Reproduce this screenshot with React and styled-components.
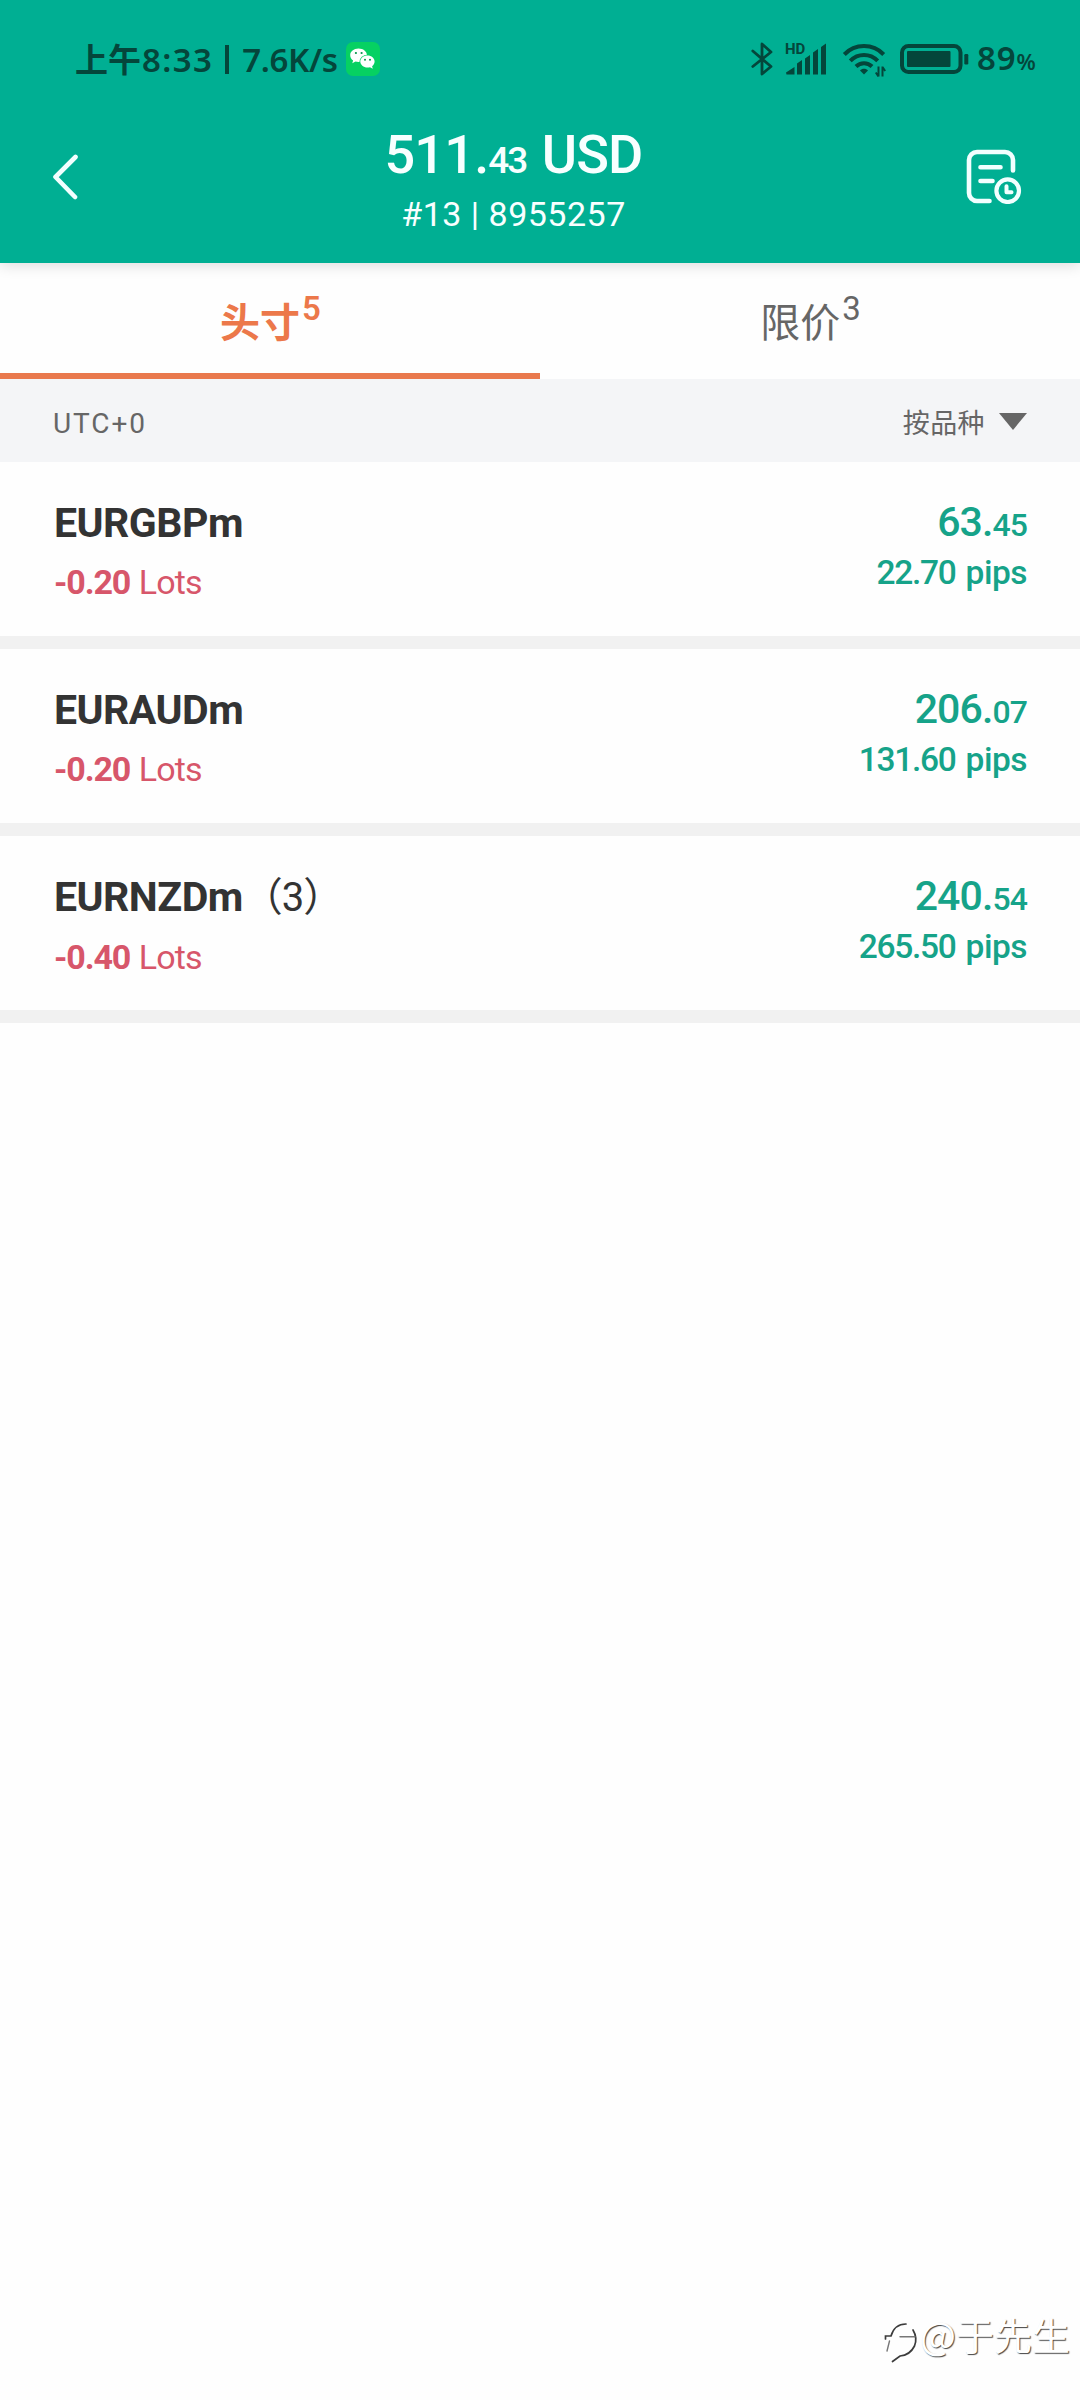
import React from 'react';
import styled, { createGlobalStyle } from 'styled-components';

const positions = [
    { symbol: 'EURGBPm', lots: '-0.20', whole: '63.', cents: '45', pips: '22.70' },
    { symbol: 'EURAUDm', lots: '-0.20', whole: '206.', cents: '07', pips: '131.60' },
    { symbol: 'EURNZDm', count: 3, lots: '-0.40', whole: '240.', cents: '54', pips: '265.50' },
];

function WechatIcon() {
    return (
        <svg width="34" height="34" viewBox="0 0 34 34">
            <rect width="34" height="34" rx="7" fill="#06d162" />
            <path d="M12.5 6.5c-4.800 0-8.300 3-8.300 6.700 0 2.200 1.100 3.900 2.900 5.200l-.8 2.900 3.200-1.700c1 .3 1.900.4 3 .4 4.700 0 8.400-3 8.400-6.800s-3.700-6.700-8.400-6.700z" fill="#fff" />
            <ellipse cx="21.500" cy="19.600" rx="8" ry="6.900" fill="#06d162" />
            <path d="M21.500 13.600c-4.100 0-7.200 2.700-7.200 6s3.100 6 7.200 6c.9 0 1.700-.1 2.500-.3l2.800 1.400-.7-2.400c1.600-1.200 2.500-2.800 2.500-4.700 0-3.300-3-6-7.100-6z" fill="#fff" />
            <circle cx="9.900" cy="11" r="1.100" fill="#06964a" />
            <circle cx="15.600" cy="11" r="1.100" fill="#06964a" />
            <circle cx="19" cy="17.800" r="1" fill="#06964a" />
            <circle cx="24" cy="17.800" r="1" fill="#06964a" />
        </svg>
    );
}

function BluetoothIcon() {
    return (
        <svg width="24" height="36" viewBox="0 0 24 36" fill="none" stroke="#04463b" strokeWidth="2.800" strokeLinecap="round" strokeLinejoin="round">
            <path d="M1.800 10 20 25.500 11 33V3l9 8L1.800 25.500" />
        </svg>
    );
}

function SignalIcon() {
    return (
        <svg width="42" height="46" viewBox="0 -6 42 46" fill="#04463b">
            <text x="0" y="12" fontFamily="Roboto, sans-serif" fontWeight="700" fontSize="15">HD</text>
            <path d="M1 30.500 9.500 25v7.500H1.500zM12 21.500 17 18v14.500h-5zM20 16.500l5-3.500v19.500h-5zM28 10.500 33 7v25.500h-5zM36 5l5-3.500v31h-5z" />
        </svg>
    );
}

function WifiIcon() {
    return (
        <svg width="44" height="36" viewBox="0 0 44 36" fill="none" stroke="#04463b" strokeWidth="4">
            <path d="M2.300 13.500C13 2.300 31 2.300 41.700 13.500" />
            <path d="M8.300 19.800C16 12 28 12 35.700 19.800" />
            <path d="M14 25.500c4.500-4.500 11.500-4.500 16 0" />
            <path d="M18 29.500c2-2.500 6-2.500 8 0L22 33.500z" fill="#04463b" stroke="none" />
            <path d="M36.500 25.500v10M36.500 35.500l-2.700-4M40.500 35.500v-10M40.500 26l2.700 4" strokeWidth="2" />
        </svg>
    );
}

function BatteryIcon() {
    return (
        <svg width="70" height="30" viewBox="0 0 70 30" fill="#04463b">
            <rect x="2" y="2" width="58.500" height="26" rx="6.500" fill="none" stroke="#04463b" strokeWidth="4" />
            <rect x="7" y="7" width="43.500" height="16" rx="1" />
            <rect x="64.300" y="10" width="4" height="10.500" rx="1.200" />
        </svg>
    );
}

function HistoryIcon() {
    return (
        <svg width="58" height="58" viewBox="0 0 58 58" fill="none" stroke="#f2ffff" strokeWidth="4.600" strokeLinecap="round" strokeLinejoin="round">
            <path d="M49 24.500V14a8 8 0 0 0-8-8H13a8 8 0 0 0-8 8v33a8 8 0 0 0 8 8h12.500" />
            <path d="M16.500 21.300h20M16.500 35h12" />
            <circle cx="43.700" cy="44.700" r="11.300" strokeWidth="4.200" />
            <path d="M42.500 40.300v6h5" strokeWidth="4" />
        </svg>
    );
}

function PositionRow({ item }) {
    return (
        <Row>
            <div>
                <Symbol>{item.symbol}{item.count && <Count>（{item.count}）</Count>}</Symbol>
                <Lots><b>{item.lots}</b> Lots</Lots>
            </div>
            <Result>
                <Profit>{item.whole}<small>{item.cents}</small></Profit>
                <Pips>{item.pips} <span>pips</span></Pips>
            </Result>
        </Row>
    );
}

function App() {
    return (
        <Screen>
            <GlobalStyle />
            <Header>
                <StatusBar>
                    <Clock>上午<Time>8:33</Time><i /><Speed>7.6K/s</Speed></Clock>
                    <WechatIcon />
                    <StatusIcons>
                        <BluetoothIcon />
                        <SignalIcon />
                        <WifiIcon />
                        <BatteryIcon />
                        <Battery>89<small>%</small></Battery>
                    </StatusIcons>
                </StatusBar>
                <TitleBar>
                    <Back>
                        <svg width="28" height="46" viewBox="0 0 28 46" fill="none" stroke="#f2ffff" strokeWidth="4.600" strokeLinecap="round" strokeLinejoin="round">
                            <path d="M24.500 3 4.500 23l19.500 20" />
                        </svg>
                    </Back>
                    <Account>
                        <Balance>511.<small>43</small> USD</Balance>
                        <AccountNo>#13 | 8955257</AccountNo>
                    </Account>
                    <History><HistoryIcon /></History>
                </TitleBar>
            </Header>
            <Tabs>
                <Tab $active>头寸<sup>5</sup></Tab>
                <Tab>限价<sup>3</sup></Tab>
            </Tabs>
            <SortBar>
                <Zone>UTC+0</Zone>
                <SortBy>按品种<Triangle /></SortBy>
            </SortBar>
            {positions.map((item) => <PositionRow key={item.symbol} item={item} />)}
            <Watermark>
                <svg width="36" height="42" viewBox="0 0 36 42" fill="none" strokeWidth="1.700" strokeLinecap="round">
                    <g stroke="#3c3c3c">
                        <path d="M1.500 17v-3h5.500C9 7 14 2 22 2" />
                        <path d="M29 8c3 5 3.500 11 1.500 16-3 6-8 9.500-14.500 10L8.500 39.500" />
                    </g>
                    <path d="M5.500 19 3 29M16 14.700h15" stroke="#777" strokeWidth="1.400" />
                </svg>
                <span>@于先生</span>
            </Watermark>
        </Screen>
    );
}

export default App;

// Style Components

const GlobalStyle = createGlobalStyle`
    body {
        margin: 0;
        background-color: #fefefe;
        font-family: Roboto, "Noto Sans CJK SC", sans-serif;
    }
    svg {
        display: block;
        flex-shrink: 0;
    }
`

const Screen = styled.div`
    display: flex;
    flex-direction: column;
    width: 1080px;
    height: 2400px;
    background-color: #fefefe;
`

const Header = styled.header`
    position: relative;
    height: 263px;
    background-color: #00af93;
    box-shadow: 0 2px 14px rgba(0, 0, 0, 0.14);
`

const StatusBar = styled.div`
    display: flex;
    align-items: center;
    height: 118px;
    padding: 0 43px 0 75px;
    color: #04463b;
`

const Clock = styled.div`
    display: flex;
    align-items: center;
    width: 271px;
    padding-top: 1px;
    font-family: "Noto Sans", "Noto Sans CJK SC", sans-serif;
    font-size: 33px;
    font-weight: 600;
    line-height: 40px;
    white-space: nowrap;

    i {
        width: 4px;
        height: 29px;
        margin: 0 13px 0 12px;
        background-color: #04463b;
    }
`

const Time = styled.span`
    margin-left: 1px;
    letter-spacing: 1.4px;
`

const Speed = styled.span`
    letter-spacing: -0.4px;
`

const StatusIcons = styled.div`
    display: flex;
    align-items: center;
    margin-left: auto;

    svg:nth-child(1) { margin-right: 10px; }
    svg:nth-child(2) { margin-right: 15px; }
    svg:nth-child(3) { margin-right: 14px; }
    svg:nth-child(4) { margin-right: 7px; }
`

const Battery = styled.span`
    width: 60px;
    padding-top: 1px;
    font-family: "Noto Sans", sans-serif;
    font-size: 33px;
    font-weight: 600;
    line-height: 40px;
    letter-spacing: 0.9px;
    white-space: nowrap;

    small {
        font-size: 22px;
    }
`

const TitleBar = styled.div`
    display: flex;
    height: 145px;
    color: #f8ffff;
`

const Back = styled.div`
    width: 80px;
    padding: 36px 0 0 51px;
    box-sizing: border-box;
`

const Account = styled.div`
    flex: 1;
    text-align: center;
    white-space: nowrap;
`

const Balance = styled.div`
    height: 73px;
    font-size: 54px;
    font-weight: 500;
    line-height: 73px;
    letter-spacing: -0.8px;
    word-spacing: 3px;

    small {
        font-size: 37px;
        letter-spacing: -2.2px;
    }
`

const AccountNo = styled.div`
    margin-top: 3px;
    font-size: 34px;
    line-height: 40px;
    letter-spacing: 0.5px;
`

const History = styled.div`
    width: 133px;
    padding: 28px 0 0 17px;
    box-sizing: border-box;
`

const Tabs = styled.nav`
    display: flex;
    height: 116px;
`

const Tab = styled.div`
    flex: 1;
    box-sizing: border-box;
    padding: 31px 0 0 1px;
    border-bottom: 6px solid ${props => props.$active ? "#e9794d" : "transparent"};
    color: ${props => props.$active ? "#ec784a" : "#666"};
    font-size: 40px;
    font-weight: ${props => props.$active ? 700 : 400};
    line-height: 60px;
    text-align: center;

    sup {
        position: relative;
        top: -17px;
        margin-left: 2px;
        font-size: 33px;
        font-weight: ${props => props.$active ? 600 : 400};
        line-height: 0;
        vertical-align: baseline;
    }
`

const SortBar = styled.div`
    display: flex;
    align-items: center;
    justify-content: space-between;
    height: 83px;
    padding: 6px 53px 0;
    box-sizing: border-box;
    background-color: #f4f5f7;
    color: #666;
    font-size: 27px;
    line-height: 40px;
`

const Zone = styled.span`
    font-size: 28px;
    letter-spacing: 1.9px;
`

const SortBy = styled.div`
    display: flex;
    align-items: center;
    letter-spacing: 0.4px;
`

const Triangle = styled.i`
    margin: 0 0 4px 14px;
    border: 14px solid transparent;
    border-top: 17px solid #666;
    border-bottom: 0;
`

const Row = styled.section`
    display: flex;
    justify-content: space-between;
    height: 174px;
    padding: 0 53px 0 54px;
    border-bottom: 13px solid #f1f1f1;
    white-space: nowrap;
`

const Symbol = styled.h3`
    margin: 37px 0 15px;
    color: #333;
    font-size: 41px;
    font-weight: 700;
    line-height: 48px;
    letter-spacing: -0.5px;
`

const Count = styled.span`
    font-weight: 400;
    font-size: 40px;
    letter-spacing: -1px;
`

const Lots = styled.div`
    color: #d7566a;
    font-size: 34px;
    line-height: 40px;
    letter-spacing: -0.9px;
    word-spacing: 1px;

    b {
        letter-spacing: -1.1px;
    }
`

const Result = styled.div`
    padding-top: 36px;
    color: #16a389;
    font-weight: 500;
    text-align: right;
`

const Profit = styled.div`
    height: 48px;
    font-size: 41px;
    line-height: 48px;
    letter-spacing: -0.9px;

    small {
        font-size: 32px;
    }
`

const Pips = styled.div`
    margin-top: 7px;
    font-size: 33.5px;
    line-height: 40px;
    letter-spacing: -1.3px;
    word-spacing: 3px;

    span {
        letter-spacing: -0.5px;
    }
`

const Watermark = styled.div`
    display: flex;
    align-items: flex-start;
    justify-content: flex-end;
    margin-top: auto;
    padding: 0 10px 36px 0;
    color: #fff;
    font-family: "Noto Sans CJK SC", sans-serif;
    font-size: 38px;
    line-height: 54px;
    text-shadow: 1px 1px 1px #444;

    svg {
        margin-top: 12px;
    }
    span {
        margin-top: -3px;
    }
`
